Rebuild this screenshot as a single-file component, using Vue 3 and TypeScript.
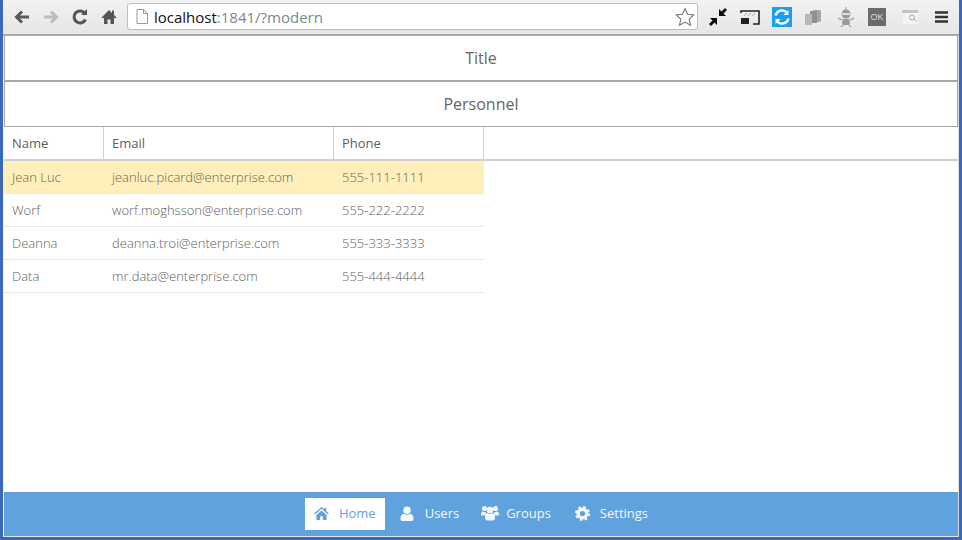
<template>
    <div class="window">
        <header class="chrome">
            <div class="nav-icons">
                <svg width="18" height="18" viewBox="0 0 18 18"><path d="M16 9H4M9 3.500 3.500 9 9 14.500" fill="none" stroke="#5a5a5a" stroke-width="3" /></svg>
                <svg width="18" height="18" viewBox="0 0 18 18"><path d="M2 9h12M9 3.500 14.500 9 9 14.500" fill="none" stroke="#bcbcbc" stroke-width="3" /></svg>
                <svg width="18" height="18" viewBox="0 0 18 18"><path d="M14.500 11.500A6 6 0 1 1 14 5.500" fill="none" stroke="#555" stroke-width="3" /><path d="M10 7h6V1z" fill="#555" /></svg>
                <svg width="18" height="18" viewBox="0 0 18 18"><path d="M9 2 1.500 9.500 3 10.500 4 9.500V16h3.500v-4.500h3V16H14V9.500l1 1 1.500-1-2.500-2.500V2.500h-2v2.500z" fill="#555" /></svg>
            </div>
            <div class="omnibox">
                <svg width="12" height="15" viewBox="0 0 12 15"><path d="M1 .5h6.500l4 4v10H1zM7.500.5v4h4" fill="#fff" stroke="#999" /></svg>
                <span class="url"><b>localhost</b>:1841/?modern</span>
                <svg class="star" width="20" height="20" viewBox="0 0 20 20"><path d="m10 1.500 2.600 5.700 6.200.700-4.600 4.200 1.300 6.100L10 15.100 4.500 18.200l1.300-6.100L1.200 7.900l6.200-.700z" fill="#fff" stroke="#777" stroke-width="1.100" /></svg>
            </div>
            <div class="ext-icons">
                <svg width="20" height="20" viewBox="0 0 20 20"><path d="M11 9V2l2.500 2.500L17 1l2 2-3.500 3.500L18 9zM9 11v7l-2.500-2.500L3 19l-2-2 3.500-3.500L2 11z" fill="#0c0c0c" /></svg>
                <svg width="20" height="16" viewBox="0 0 20 16"><path d="M1 4V2h18v13h-6" fill="none" stroke="#222" stroke-width="1.600" /><path d="M1 9h8v6H1z" fill="#222" /><path d="M4 7 7 4M8 7l3-3M12 7l3-3" stroke="#aaa" /></svg>
                <svg width="20" height="20" viewBox="0 0 20 20"><rect width="20" height="20" fill="#1a9ff0" /><path d="M3.500 8.500a6.800 6.800 0 0 1 11.500-3M16.500 11.500a6.800 6.800 0 0 1-11.500 3" fill="none" stroke="#fff" stroke-width="2.400" /><path d="M16.500 3v5h-5zM3.500 17v-5h5z" fill="#fff" /></svg>
                <svg width="18" height="18" viewBox="0 0 18 18"><path d="M9 2h7l1 1v10l-1 1H9z" fill="#a6a6a6" /><path d="M6 3h7v12H6z" fill="#8f8f8f" /><path d="M1 6h7v11H1z" fill="#b8b8b8" /></svg>
                <svg width="18" height="20" viewBox="0 0 18 20"><path d="M9 0v3" stroke="#999" /><circle cx="9" cy="7" r="4.500" fill="#999" /><path d="M5 7h8" stroke="#ddd" stroke-width="2" /><path d="M6 12h6l1 4-1 2H6l-1-2z" fill="#999" /><path d="m1 11 4 2M17 11l-4 2M6 18l-2 2M12 18l2 2" stroke="#aaa" stroke-width="1.500" /></svg>
                <span class="ok">OK</span>
                <svg width="17" height="16" viewBox="0 0 17 16"><path d="M0 1h16v3H0z" fill="#c4c4c4" /><path d="M1 4h15v11H1z" fill="#f4f4f4" /><circle cx="10" cy="8.500" r="2.500" fill="none" stroke="#aaa" /><path d="m12 10 3 3" stroke="#aaa" /></svg>
                <svg width="13" height="14" viewBox="0 0 13 14"><path d="M0 2.500h13M0 7h13M0 11.500h13" stroke="#333" stroke-width="2.400" /></svg>
            </div>
        </header>

        <main class="page">
            <div class="panel-title">Title</div>
            <div class="panel-title second">Personnel</div>
            <div class="grid-head">
                <div v-for="col in columns" :key="col.label" class="head-cell" :style="{ width: col.width + 'px' }">
                    {{ col.label }}
                </div>
            </div>
            <div
                v-for="(row, i) in people"
                :key="row.email"
                class="row"
                :class="{ selected: i === 0 }"
            >
                <div class="cell" style="width: 100px">{{ row.name }}</div>
                <div class="cell" style="width: 230px">{{ row.email }}</div>
                <div class="cell" style="width: 150px">{{ row.phone }}</div>
            </div>
            <div class="spacer"></div>
            <nav class="tabbar">
                <a class="tab active">
                    <span class="tab-icon">
                        <svg width="15" height="13" viewBox="0 0 16 14"><path d="M8 0 0 7l1 1 7-6 7 6 1-1-3-2.700V.8h-2v1.800zM2.500 8.500 8 3.700l5.500 4.800V14H9.500v-4h-3v4h-4z" fill="#5fa2dd" /></svg>
                    </span>
                    Home
                </a>
                <a class="tab">
                    <span class="tab-icon">
                        <svg width="14" height="15" viewBox="0 0 14 16"><circle cx="7" cy="4.500" r="4" fill="#f4f8fc" /><path d="M0 13.500C0 10.500 1.500 8.500 3.500 8.200 5.500 9.800 8.500 9.800 10.500 8.200 12.500 8.500 14 10.500 14 13.500 14 15 13 16 11.500 16h-9C1 16 0 15 0 13.500z" fill="#f4f8fc" /></svg>
                    </span>
                    Users
                </a>
                <a class="tab">
                    <span class="tab-icon">
                        <svg width="18" height="16" viewBox="0 0 18 16"><g fill="#f4f8fc"><circle cx="3.500" cy="3.500" r="2.500" /><circle cx="14.500" cy="3.500" r="2.500" /><circle cx="9" cy="5" r="3.300" /><path d="M0 10c0-2 .6-3.500 2-3.500 1 .8 2 .8 3 .6-.4 1-.5 2.400-.5 3.400H1.200C.5 10.500 0 10.500 0 10zM18 10c0-2-.6-3.500-2-3.500-1 .8-2 .8-3 .6.400 1 .5 2.400.5 3.400h3.300c.7 0 1.200 0 1.200-.5zM4 13c0-3 1-5 2.500-5 1.500 1.200 3.500 1.200 5 0C13 8 14 10 14 13c0 1.300-1 2.500-2.200 2.500H6.200C5 15.500 4 14.300 4 13z" /></g></svg>
                    </span>
                    Groups
                </a>
                <a class="tab">
                    <span class="tab-icon">
                        <svg width="15" height="15" viewBox="0 0 15 15"><circle cx="7.500" cy="7.500" r="4.300" fill="none" stroke="#f4f8fc" stroke-width="3.400" /><circle cx="7.500" cy="7.500" r="6.200" fill="none" stroke="#f4f8fc" stroke-width="2.600" stroke-dasharray="2.430 2.440" /></svg>
                    </span>
                    Settings
                </a>
            </nav>
        </main>
        <div class="footer-line"></div>
    </div>
</template>

<script setup lang="ts">
const columns = [
    { label: "Name", width: 100 },
    { label: "Email", width: 230 },
    { label: "Phone", width: 150 },
];

const people = [
    { name: "Jean Luc", email: "jeanluc.picard@enterprise.com", phone: "555-111-1111" },
    { name: "Worf", email: "worf.moghsson@enterprise.com", phone: "555-222-2222" },
    { name: "Deanna", email: "deanna.troi@enterprise.com", phone: "555-333-3333" },
    { name: "Data", email: "mr.data@enterprise.com", phone: "555-444-4444" },
];
</script>

<style>
html,
body {
    margin: 0;
    background: #3d68b5;
}
</style>

<style scoped>
.window {
    width: 962px;
    height: 540px;
    box-sizing: border-box;
    display: flex;
    flex-direction: column;
    overflow: hidden;
    background: #3d68b5;
    padding: 0 3px;
    font-family: "Open Sans", sans-serif;
}

.chrome {
    height: 34px;
    box-sizing: content-box;
    flex: none;
    display: flex;
    align-items: center;
    background: linear-gradient(#f2f2f2, #e6e6e6);
    border-bottom: 2px solid #a9a9a9;
}

.nav-icons {
    display: flex;
    gap: 11px;
    padding-left: 10px;
    width: 124px;
    box-sizing: border-box;
}

.omnibox {
    width: 571px;
    height: 27px;
    margin-bottom: 1px;
    box-sizing: border-box;
    display: flex;
    align-items: center;
    gap: 6px;
    padding: 0 2px 0 8px;
    background: #fff;
    border: 1px solid #bdbdbd;
    border-radius: 3px;
}

.url {
    flex: 1;
    color: #7b8791;
    font: 15px "Open Sans", sans-serif;
}

.url b {
    font-weight: 400;
    color: #111;
}

.ext-icons {
    display: grid;
    grid-template-columns: 32px 32px 32px 33px 31px 34px 33px auto;
    align-items: center;
    padding-left: 10px;
}

.ok {
    width: 18px;
    height: 18px;
    background: #6b6b6b;
    color: #ddd;
    font: 9px/18px "Liberation Sans", sans-serif;
    text-align: center;
}

.page {
    flex: 1;
    min-height: 0;
    display: flex;
    flex-direction: column;
    background: #fff;
    border-left: 1px solid #eef1f6;
    border-right: 1px solid #dcdcdc;
    border-bottom: 1px solid #e4e4e4;
}

.panel-title {
    height: 44px;
    flex: none;
    display: flex;
    align-items: center;
    justify-content: center;
    font-size: 16px;
    color: #666;
    border: 1px solid #a8a8a8;
    border-top: 0;
    margin-bottom: 1px;
    box-shadow: 0 1px 0 #a8a8a8;
}

.panel-title.second {
    margin-bottom: 0;
    box-shadow: none;
}

.grid-head {
    height: 34px;
    flex: none;
    display: flex;
    box-sizing: border-box;
    border-bottom: 2px solid #d0d0d0;
}

.head-cell {
    box-sizing: border-box;
    border-right: 1px solid #d0d0d0;
    padding-left: 8px;
    font-size: 13px;
    line-height: 32px;
    color: #5f5f5f;
}

.row {
    width: 480px;
    height: 33px;
    flex: none;
    box-sizing: border-box;
    display: flex;
    border-bottom: 1px solid #e6e6e6;
    color: #5e5e5e;
}

.row.selected {
    background: #ffefbb;
    color: #6a6450;
}

.cell {
    box-sizing: border-box;
    padding-left: 8px;
    font-size: 13px;
    font-weight: 300;
    line-height: 32px;
}

.spacer {
    flex: 1;
}

.tabbar {
    height: 44px;
    flex: none;
    display: flex;
    justify-content: center;
    align-items: center;
    gap: 6px;
    background: #5fa2dd;
    font-size: 13px;
    color: #f4f8fc;
}

.tab {
    height: 32px;
    box-sizing: border-box;
    display: flex;
    align-items: center;
    padding: 0 8px 2px;
}

.tab:last-child {
    margin-left: 2px;
    margin-right: 1px;
}

.tab-icon {
    width: 25px;
    display: flex;
    align-items: center;
}

.tab.active {
    background: #fff;
    color: #5fa2dd;
    padding: 0 9px 2px;
    margin-right: 1px;
}

.footer-line {
    height: 3px;
    flex: none;
}
</style>
